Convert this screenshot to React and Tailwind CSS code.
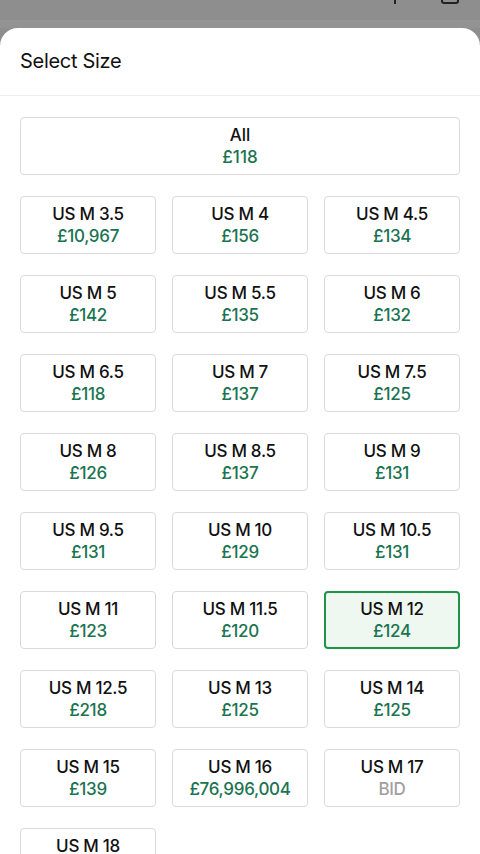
import React from "react";

const sizes = [
  ["US M 3.5", "£10,967"],
  ["US M 4", "£156"],
  ["US M 4.5", "£134"],
  ["US M 5", "£142"],
  ["US M 5.5", "£135"],
  ["US M 6", "£132"],
  ["US M 6.5", "£118"],
  ["US M 7", "£137"],
  ["US M 7.5", "£125"],
  ["US M 8", "£126"],
  ["US M 8.5", "£137"],
  ["US M 9", "£131"],
  ["US M 9.5", "£131"],
  ["US M 10", "£129"],
  ["US M 10.5", "£131"],
  ["US M 11", "£123"],
  ["US M 11.5", "£120"],
  ["US M 12", "£124", true],
  ["US M 12.5", "£218"],
  ["US M 13", "£125"],
  ["US M 14", "£125"],
  ["US M 15", "£139"],
  ["US M 16", "£76,996,004"],
  ["US M 17", "BID"],
  ["US M 18", "£129"],
];

function SizeButton({ label, price, selected }) {
  const isBid = price === "BID";
  return (
    <div
      className={
        selected
          ? "h-[58px] rounded-[4px] border-2 border-[#1f9447] bg-[#eef8f1] flex flex-col items-center justify-center"
          : "h-[58px] rounded-[4px] border border-[#dadada] bg-white flex flex-col items-center justify-center"
      }
    >
      <div className="text-[17px] leading-[22px] font-medium text-[#111] tracking-[-0.3px]">{label}</div>
      <div
        className={
          isBid
            ? "text-[17px] leading-[22px] font-medium text-[#a0a0a0] tracking-[-0.3px]"
            : "text-[17px] leading-[22px] font-medium text-[#1b7450] tracking-[-0.3px]"
        }
      >
        {price}
      </div>
    </div>
  );
}

export default function App() {
  return (
    <div
      className="w-[480px] h-[854px] overflow-hidden bg-[#8e8e8e] flex flex-col"
      style={{ fontFamily: "Inter, 'Liberation Sans', sans-serif" }}
    >
      <div className="h-[28px] relative shrink-0">
        <svg className="absolute left-[14px] top-[-10px]" width="16" height="16" viewBox="0 0 16 16">
          <path d="M10 2 L5 8" stroke="#111" strokeWidth="2.2" fill="none" strokeLinecap="round" />
        </svg>
        <div className="absolute left-[394px] top-0 w-[2px] h-[4px] bg-[#222]" />
        <div className="absolute left-[441px] top-[-12px] w-[18px] h-[16px] border-2 border-[#222] rounded-[3px]" />
        <div className="absolute left-0 right-0 top-[20px] h-[8px] bg-[#939393]" />
      </div>
      <div className="flex-1 bg-white rounded-t-[18px] flex flex-col">
        <div className="h-[68px] flex items-center px-5 pb-[2px] border-b border-[#ededed] shrink-0">
          <span className="text-[20px] text-[#111] tracking-[-0.3px]">Select Size</span>
        </div>
        <div className="px-5 pt-[21px] flex flex-col gap-[21px]">
          <div className="h-[58px] rounded-[4px] border border-[#dadada] bg-white flex flex-col items-center justify-center">
            <div className="text-[17px] leading-[22px] font-medium text-[#111]">All</div>
            <div className="text-[17px] leading-[22px] font-medium text-[#1b7450]">£118</div>
          </div>
          <div className="grid grid-cols-3 gap-x-4 gap-y-[21px]">
            {sizes.map(([l, p, s]) => (
              <SizeButton key={l} label={l} price={p} selected={s} />
            ))}
          </div>
        </div>
      </div>
    </div>
  );
}
